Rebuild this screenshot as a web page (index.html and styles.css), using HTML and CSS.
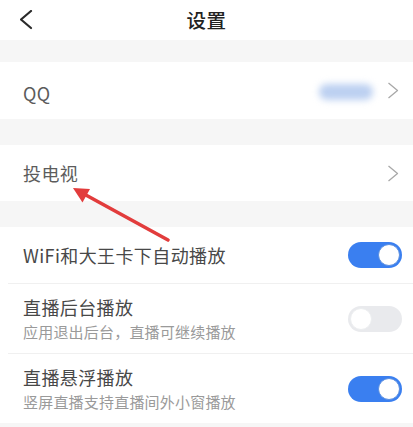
FILE: index.html
```html
<!DOCTYPE html>
<html lang="zh-CN">
<head>
<meta charset="utf-8">
<title>设置</title>
<link rel="stylesheet" href="styles.css">
</head>
<body>
<div class="page">
  <header class="topbar">
    <svg class="back" width="14" height="20" viewBox="0 0 14 20"><polyline points="11,1 1,9.5 11,18" fill="none" stroke="#2a2a2a" stroke-width="2.2" stroke-linecap="round" stroke-linejoin="round"/></svg>
    <h1 class="title">设置</h1>
    <span></span>
  </header>

  <div class="gap gap-first"></div>

  <section class="row row-qq">
    <span class="label label-light">QQ</span>
    <span class="right">
      <span class="blurred"></span>
      <svg class="chev" width="12" height="17" viewBox="0 0 12 17"><polyline points="1.5,1 10.5,8.5 1.5,16" fill="none" stroke="#a8a8a8" stroke-width="1.3" stroke-linejoin="round"/></svg>
    </span>
  </section>

  <div class="gap"></div>

  <section class="row">
    <span class="label label-light">投电视</span>
    <svg class="chev" width="12" height="17" viewBox="0 0 12 17"><polyline points="1.5,1 10.5,8.5 1.5,16" fill="none" stroke="#a8a8a8" stroke-width="1.3" stroke-linejoin="round"/></svg>
  </section>

  <div class="gap"></div>

  <section class="group">
    <div class="row row-toggle">
      <span class="label">WiFi和大王卡下自动播放</span>
      <span class="switch on"><span class="knob"></span></span>
    </div>
    <div class="divider"></div>
    <div class="row row-tall">
      <div class="texts">
        <span class="label">直播后台播放</span>
        <span class="sub">应用退出后台，直播可继续播放</span>
      </div>
      <span class="switch off"><span class="knob"></span></span>
    </div>
    <div class="divider"></div>
    <div class="row row-tall">
      <div class="texts">
        <span class="label">直播悬浮播放</span>
        <span class="sub">竖屏直播支持直播间外小窗播放</span>
      </div>
      <span class="switch on"><span class="knob"></span></span>
    </div>
  </section>
</div>

<svg class="annot" width="413" height="427" viewBox="0 0 413 427">
  <line x1="168" y1="240" x2="84" y2="194" stroke="#e23c3c" stroke-width="3.6" stroke-linecap="round"/>
  <polygon points="73,188 90,189 82.5,202.5" fill="#e23c3c"/>
</svg>
</body>
</html>
```

FILE: styles.css
```css
html, body {
  margin: 0;
  padding: 0;
}
body {
  background: #f6f6f6;
  font-family: "Noto Sans CJK SC", "Noto Sans", sans-serif;
  width: 413px;
  height: 427px;
  overflow: hidden;
  position: relative;
}
.page {
  display: flex;
  flex-direction: column;
}
.topbar {
  height: 40px;
  background: #fff;
  display: grid;
  grid-template-columns: 1fr auto 1fr;
  align-items: center;
  padding: 0 0 0 20px;
}
.back {
  display: block;
}
.title {
  margin: 0;
  font-size: 19.5px;
  font-weight: 500;
  color: #222;
  line-height: 36px;
  letter-spacing: 0.5px;
  transform: translateX(-10px);
}
.gap {
  height: 26px;
}
.gap-first {
  height: 22px;
}
.row {
  background: #fff;
  height: 56px;
  display: flex;
  align-items: center;
  justify-content: space-between;
  padding: 0 14px 0 23px;
}
.row-qq {
  height: 57px;
}
.label {
  font-size: 18px;
  color: #484848;
  letter-spacing: 0.4px;
  line-height: 24px;
}
.label-light {
  color: #5c5c5c;
}
.row-qq .label {
  padding-top: 4px;
}
.right {
  display: flex;
  align-items: center;
  gap: 14px;
}
.blurred {
  display: block;
  width: 54px;
  height: 16px;
  border-radius: 8px;
  background: #bcd0f1;
  filter: blur(3.5px);
  margin-top: 2px;
}
.chev {
  display: block;
}
.group {
  background: #fff;
  display: flex;
  flex-direction: column;
}
.row-toggle {
  padding-right: 11px;
}
.row-tall {
  height: 69px;
  padding-right: 11px;
}
.divider {
  height: 1px;
  background: #f0f0f0;
  margin-left: 8px;
}
.texts {
  display: flex;
  flex-direction: column;
  gap: 3px;
}
.sub {
  font-size: 15px;
  color: #9a9a9a;
  line-height: 20px;
  letter-spacing: 0.2px;
}
.switch {
  width: 54px;
  height: 26px;
  border-radius: 13px;
  display: flex;
  align-items: center;
  padding: 0 2px;
  box-sizing: border-box;
}
.switch.on {
  background: #3a7ff0;
  justify-content: flex-end;
}
.switch.off {
  background: #e9eaed;
  justify-content: flex-start;
}
.knob {
  width: 22px;
  height: 22px;
  border-radius: 50%;
  background: #fff;
  box-sizing: border-box;
}
.switch.on .knob {
  border: 1px solid #5b8fe0;
}
.switch.off .knob {
  border: 1px solid #eceef0;
}
.annot {
  position: absolute;
  left: 0;
  top: 0;
  pointer-events: none;
}
```
